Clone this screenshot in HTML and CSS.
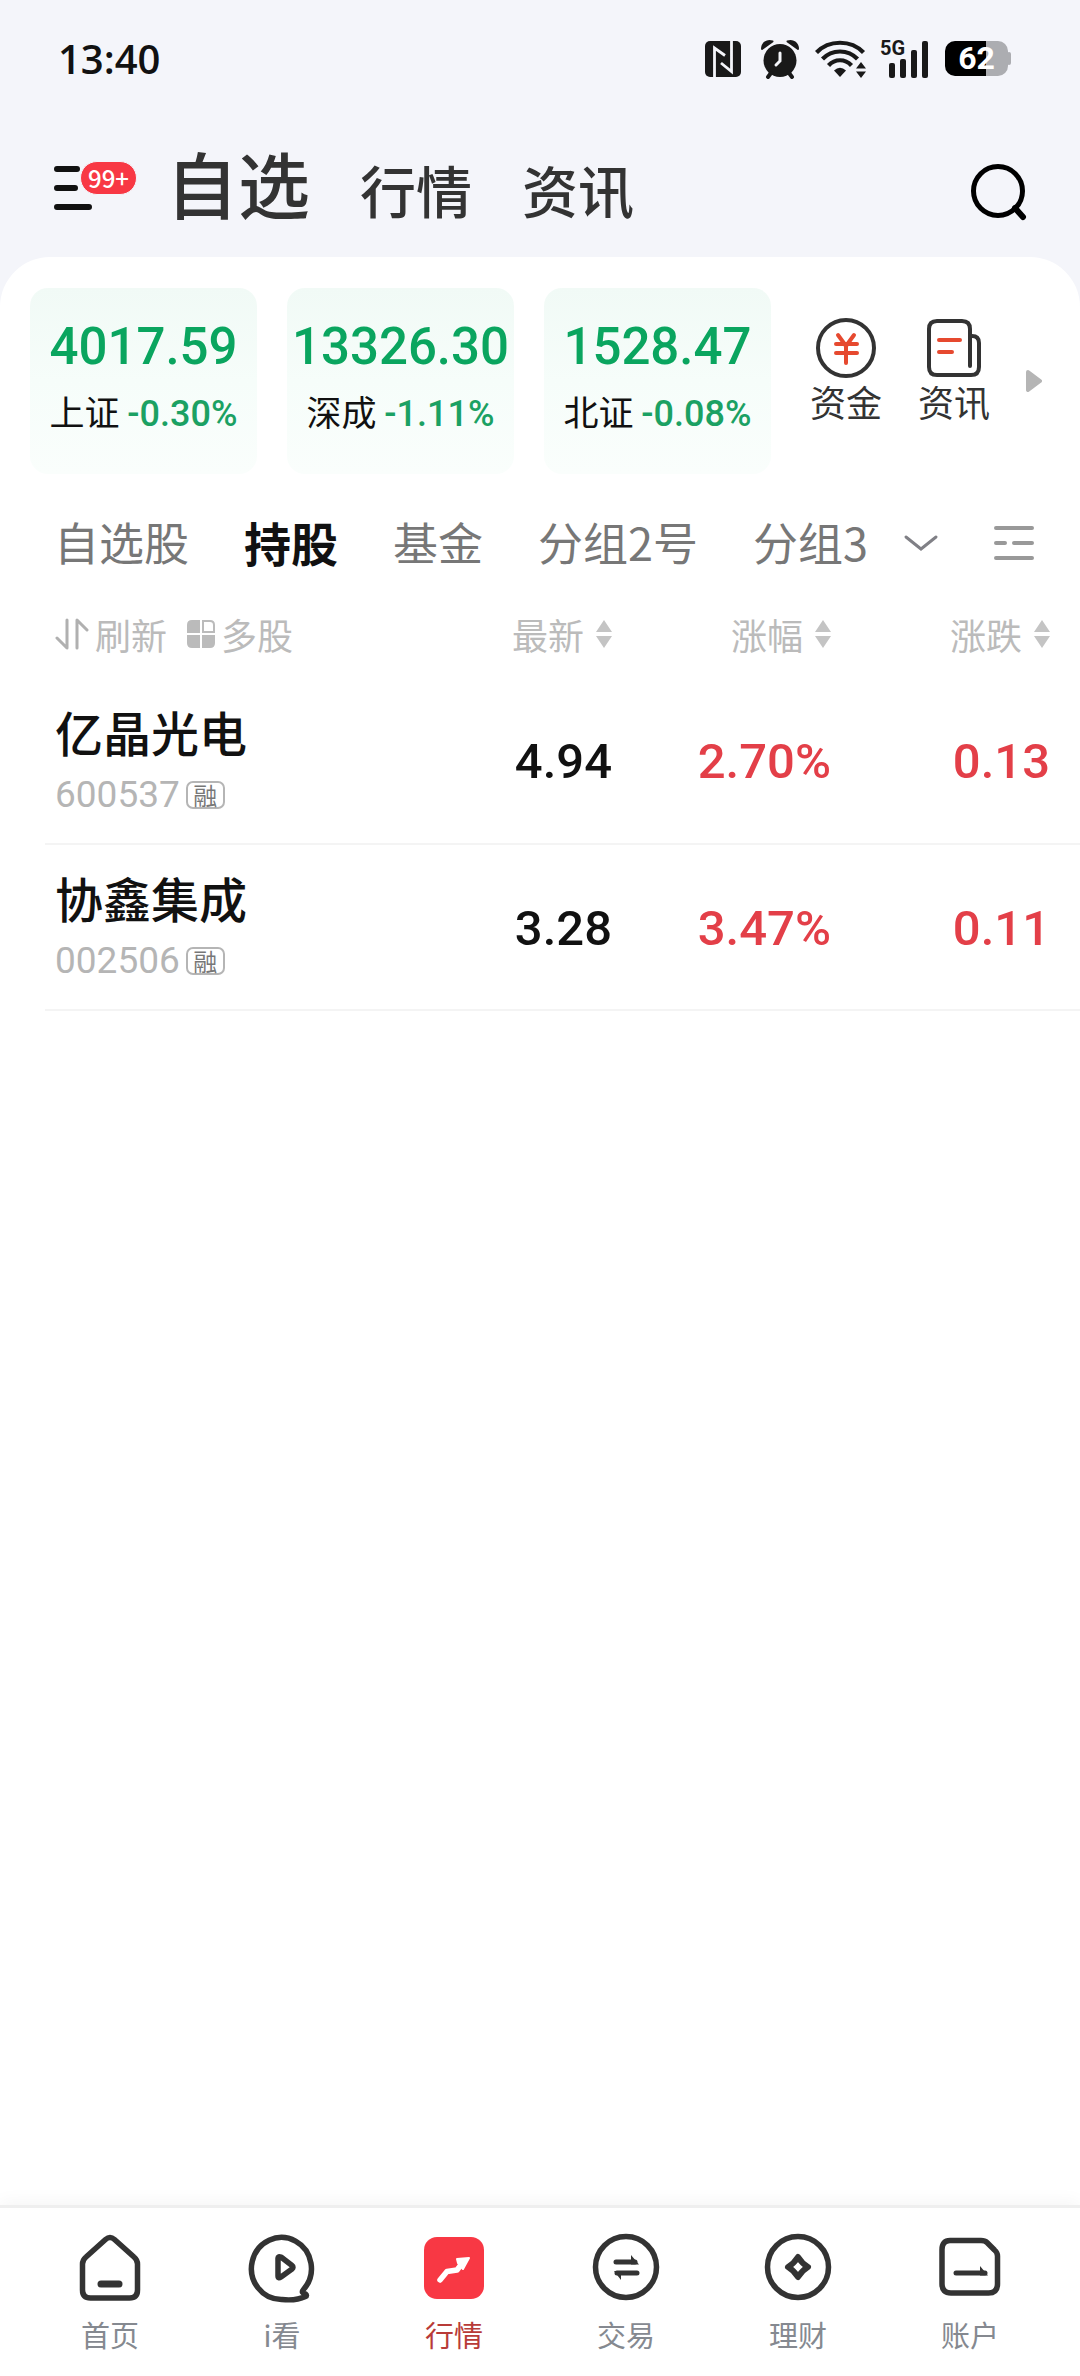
FILE: index.html
```html
<!DOCTYPE html>
<html lang="zh-CN">
<head>
    <meta charset="UTF-8">
    <meta name="viewport" content="width=device-width, initial-scale=1.0">
    <title>自选</title>
    <link rel="stylesheet" href="styles.css">
</head>
<body>
    <div class="status">
        <span class="time">13:40</span>
        <div class="status-icons">
            <svg width="36" height="38" viewBox="0 0 36 38">
                <rect x="0" y="1" width="36" height="36" rx="5" fill="#191919"/>
                <path d="M9.500 37V8L20 15.500M26.500 1v30.500L16 23" fill="none" stroke="#f4f5fa" stroke-width="2.800"/>
            </svg>
            <svg class="alarm" width="38" height="40" viewBox="0 0 38 40">
                <circle cx="19" cy="21.500" r="16.500" fill="#191919"/>
                <path d="M1 10C1 4 6 .5 11.500 2.500zM37 10C37 4 32 .5 26.500 2.500z" fill="#191919" stroke="#191919" stroke-width="2" stroke-linejoin="round"/>
                <path d="M10 34l-3 4M28 34l3 4" stroke="#191919" stroke-width="4" stroke-linecap="round"/>
                <path d="M19 14v8l-4 4" fill="none" stroke="#f4f5fa" stroke-width="3" stroke-linecap="round"/>
            </svg>
            <svg class="wifi" width="52" height="38" viewBox="0 0 52 38">
                <g fill="none" stroke="#191919" stroke-width="4.200">
                    <path d="M1.500 12.500C14-.5 36-.5 48.500 12.500"/>
                    <path d="M7.500 19C17 9 33 9 42.500 19"/>
                    <path d="M13.500 25.500C20 18.500 30 18.500 36.500 25.500"/>
                </g>
                <path d="M25 37l-6-6.500q6-5.500 12 0z" fill="#191919"/>
                <path d="M46 22l5 6.500H41zM46 38l-5-6.500h10z" fill="#191919"/>
            </svg>
            <div class="signal">
                <span>5G</span>
                <svg width="40" height="38" viewBox="0 0 40 38" fill="#191919">
                    <rect x="1" y="23" width="6" height="15" rx="2"/>
                    <rect x="12" y="19" width="6" height="19" rx="2"/>
                    <rect x="23" y="10" width="6" height="28" rx="2"/>
                    <rect x="34" y="1" width="6" height="37" rx="2"/>
                </svg>
            </div>
            <div class="battery">62</div>
        </div>
    </div>

    <header class="header">
        <button class="menu" aria-label="菜单">
            <svg width="38" height="50" viewBox="0 0 38 50" stroke="#111" stroke-width="6" stroke-linecap="round">
                <path d="M3 7h20M3 26h18M3 45h32"/>
            </svg>
            <span class="badge">99+</span>
        </button>
        <nav class="header-tabs">
            <a href="#" class="current">自选</a>
            <a href="#">行情</a>
            <a href="#">资讯</a>
        </nav>
        <button class="search" aria-label="搜索">
            <svg width="58" height="60" viewBox="0 0 58 60" fill="none" stroke="#000" stroke-width="5">
                <circle cx="28" cy="29" r="24.500"/>
                <path d="M45 46l8 9" stroke-width="6" stroke-linecap="round"/>
            </svg>
        </button>
    </header>

    <main class="panel">
        <section class="indexes">
            <a href="#" class="index-card">
                <strong>4017.59</strong>
                <span>上证 <em>-0.30%</em></span>
            </a>
            <a href="#" class="index-card">
                <strong>13326.30</strong>
                <span>深成 <em>-1.11%</em></span>
            </a>
            <a href="#" class="index-card">
                <strong>1528.47</strong>
                <span>北证 <em>-0.08%</em></span>
            </a>
            <div class="shortcuts">
                <a href="#">
                    <svg width="60" height="60" viewBox="0 0 60 60" fill="none" stroke="#333" stroke-width="4">
                        <circle cx="30" cy="30" r="28"/>
                        <path d="M22 17l8 11 8-11M30 28v17M20 26h21M20 35h21" stroke="#e6492f" stroke-linecap="round"/>
                    </svg>
                    资金
                </a>
                <a href="#">
                    <svg width="60" height="60" viewBox="0 0 60 60" fill="none" stroke="#333" stroke-width="4" stroke-linecap="round">
                        <path d="M46 48V11q0-8-8-8H13q-8 0-8 8v38q0 8 8 8h34q8 0 8-8V25q0-7-7-7"/>
                        <path d="M15 22h21M15 34h13" stroke="#e6492f"/>
                    </svg>
                    资讯
                </a>
            </div>
            <button class="more" aria-label="更多">
                <svg width="16" height="22" viewBox="0 0 16 22">
                    <path d="M2 2l12 9-12 9z" fill="#b5b5b5" stroke="#b5b5b5" stroke-width="4" stroke-linejoin="round"/>
                </svg>
            </button>
        </section>

        <nav class="groups">
            <a href="#">自选股</a>
            <a href="#" class="current">持股</a>
            <a href="#">基金</a>
            <a href="#">分组2号</a>
            <a href="#">分组3</a>
            <button class="expand" aria-label="展开">
                <svg width="36" height="20" viewBox="0 0 36 20" fill="none" stroke="#808086" stroke-width="3" stroke-linecap="round">
                    <path d="M3 4l15 12L33 4"/>
                </svg>
            </button>
            <button class="manage" aria-label="管理分组">
                <svg width="40" height="36" viewBox="0 0 40 36" stroke="#999" stroke-width="4" stroke-linecap="round">
                    <path d="M2 3h36M2 18h9M20 18h18M2 33h36"/>
                </svg>
            </button>
        </nav>

        <table class="stocks">
            <thead>
                <tr>
                    <th class="first">
                        <div class="tools">
                            <button>
                                <svg width="34" height="32" viewBox="0 0 34 32" fill="none" stroke="#b0b0b0" stroke-width="3" stroke-linecap="round" stroke-linejoin="round">
                                    <path d="M12 2v28L2 20M22 30V2l10 10"/>
                                </svg>
                                刷新
                            </button>
                            <button>
                                <svg width="28" height="28" viewBox="0 0 28 28" fill="#bbb">
                                    <path d="M5 0h8v13H0V5q0-5 5-5zM0 15h13v13H5q-5 0-5-5zM15 15h13v8q0 5-5 5h-8z"/>
                                    <path d="M16 1h7q4 0 4 4v7H16z" fill="none" stroke="#bbb" stroke-width="2"/>
                                </svg>
                                多股
                            </button>
                        </div>
                    </th>
                    <th><button>最新 <svg width="16" height="30" viewBox="0 0 16 30" fill="#c4c4c4"><path d="M8 1l8 12H0zM8 29L0 17h16z"/></svg></button></th>
                    <th><button>涨幅 <svg width="16" height="30" viewBox="0 0 16 30" fill="#c4c4c4"><path d="M8 1l8 12H0zM8 29L0 17h16z"/></svg></button></th>
                    <th><button>涨跌 <svg width="16" height="30" viewBox="0 0 16 30" fill="#c4c4c4"><path d="M8 1l8 12H0zM8 29L0 17h16z"/></svg></button></th>
                </tr>
            </thead>
            <tbody>
                <tr>
                    <td>
                        <div class="name">亿晶光电</div>
                        <div class="code">600537 <span class="tag">融</span></div>
                    </td>
                    <td>4.94</td>
                    <td class="up">2.70%</td>
                    <td class="up">0.13</td>
                </tr>
                <tr>
                    <td>
                        <div class="name">协鑫集成</div>
                        <div class="code">002506 <span class="tag">融</span></div>
                    </td>
                    <td>3.28</td>
                    <td class="up">3.47%</td>
                    <td class="up">0.11</td>
                </tr>
            </tbody>
        </table>
    </main>

    <nav class="tabbar">
        <a href="#">
            <svg width="68" height="72" viewBox="0 0 68 72" fill="none" stroke="#333" stroke-width="5.500" stroke-linejoin="round">
                <path d="M29.500 7.500q4.500-4 9 0L58 25q3.500 3 3.500 7v26q0 8-8 8h-39q-8 0-8-8V32q0-4 3.500-7z"/>
                <path d="M25 52h18" stroke-width="7" stroke-linecap="round"/>
            </svg>
            首页
        </a>
        <a href="#">
            <svg width="68" height="72" viewBox="0 0 68 72" fill="none" stroke="#333" stroke-width="5.500" stroke-linejoin="round">
                <path d="M55.500 57.500A30 31 0 1 0 34 67.500Q48 69 57.500 64.500q2-1 0-2.500-5-1-2-4.500Z"/>
                <path d="M30 26v18q0 3 3 1l11-8q2-2 0-3.500L33 25q-3-1-3 1z"/>
            </svg>
            i看
        </a>
        <a href="#" class="current">
            <svg width="68" height="72" viewBox="0 0 68 72">
                <rect x="4" y="5" width="60" height="62" rx="13" fill="#f83844"/>
                <path d="M20 48l7-8.500 10-1.500 7-9" fill="none" stroke="#fff" stroke-width="5.500" stroke-linecap="round" stroke-linejoin="round"/>
                <path d="M37 27l12-1-6 11-5-6z" fill="#fff" stroke="#fff" stroke-width="2" stroke-linejoin="round"/>
            </svg>
            行情
        </a>
        <a href="#">
            <svg width="68" height="72" viewBox="0 0 68 72" fill="none" stroke="#333" stroke-width="5.500">
                <circle cx="34" cy="35" r="30.500"/>
                <path d="M24 30h19M25 41h20" stroke-width="5" stroke-linecap="round"/>
                <path d="M39 23l8 9.500h-8zM29 48l-7-9h7z" fill="#333" stroke="none"/>
            </svg>
            交易
        </a>
        <a href="#">
            <svg width="68" height="72" viewBox="0 0 68 72" fill="none" stroke="#333" stroke-width="5.500" stroke-linejoin="round">
                <circle cx="34" cy="35" r="30.500"/>
                <path d="M34 25q4 6.500 10 10-6 3.500-10 10-4-6.500-10-10 6-3.500 10-10z" stroke-width="6"/>
            </svg>
            理财
        </a>
        <a href="#">
            <svg width="68" height="72" viewBox="0 0 68 72" fill="none" stroke="#333" stroke-width="5.500" stroke-linejoin="round">
                <path d="M14 8.500h31q4 0 6 2l7.500 7.500q3 2.500 3 6v28q0 9-9 9H15q-9 0-9-9V17.500q0-9 8-9z"/>
                <path d="M20 41h29" stroke-width="5" stroke-linecap="round"/>
                <path d="M44 34l8 9.500h-8z" fill="#333" stroke="none"/>
            </svg>
            账户
        </a>
    </nav>
</body>
</html>
```
FILE: styles.css
```css
* {
    box-sizing: border-box;
}
body {
    font-family: "Noto Sans CJK SC", sans-serif;
    margin: 0;
    min-height: 100vh;
    display: flex;
    flex-direction: column;
    background-color: #f4f5fa;
    color: #111;
}
a {
    color: inherit;
    text-decoration: none;
}
button {
    padding: 0;
    border: none;
    background: none;
    font: inherit;
    color: inherit;
    cursor: pointer;
}
svg {
    display: block;
    flex-shrink: 0;
}

/* Status bar */
.status {
    display: flex;
    justify-content: space-between;
    align-items: center;
    height: 117px;
    padding: 0 69px 0 58px;
}
.time {
    font-family: "Open Sans", sans-serif;
    font-size: 40px;
    font-weight: 600;
}
.status-icons {
    display: flex;
    align-items: center;
    color: #191919;
}
.alarm {
    margin-left: 20px;
}
.wifi {
    margin-left: 16px;
}
.signal {
    position: relative;
    margin-left: 21px;
}
.signal span {
    position: absolute;
    left: -8px;
    top: -2px;
    font-family: Roboto, sans-serif;
    font-size: 20px;
    line-height: 20px;
    font-weight: 700;
}
.battery {
    position: relative;
    width: 63px;
    margin-left: 17px;
    margin-right: 3px;
    border-radius: 10px;
    background: linear-gradient(to right, #000 65%, #acadb1 65%);
    color: #fff;
    font-family: Roboto, sans-serif;
    font-size: 32px;
    line-height: 35px;
    font-weight: 700;
    text-align: center;
}
.battery::after {
    content: "";
    position: absolute;
    right: -3px;
    top: 11px;
    width: 4px;
    height: 13px;
    border-radius: 2px;
    background-color: #acadb1;
}

/* Header */
.header {
    display: flex;
    align-items: center;
    height: 140px;
    padding: 0 52px 0 54px;
    color: #333;
}
.menu {
    position: relative;
    width: 84px;
}
.badge {
    position: absolute;
    left: 26px;
    top: -1px;
    height: 34px;
    padding: 0 7px;
    border: 1px solid #f4f5fa;
    border-radius: 17px;
    background-color: #f83844;
    color: #fff;
    font-size: 24px;
    line-height: 32px;
    font-weight: 500;
}
.header-tabs {
    flex: 1;
    display: flex;
    align-items: baseline;
    gap: 50px;
    margin-left: 28px;
    padding-bottom: 4px;
    font-size: 56px;
    line-height: 80px;
    font-weight: 500;
}
.header-tabs .current {
    font-size: 72px;
}
.search {
    padding-top: 9px;
}

/* White panel */
.panel {
    flex: 1;
    padding-top: 31px;
    border-radius: 50px 50px 0 0;
    background-color: #fff;
}
.indexes {
    display: flex;
    gap: 30px;
    padding: 0 38px 0 30px;
}
.index-card {
    flex: 1;
    display: flex;
    flex-direction: column;
    align-items: center;
    gap: 10px;
    height: 186px;
    padding-top: 29px;
    border-radius: 18px;
    background: linear-gradient(#f1faf6, #f6fdfa 50%, #fafefc);
    font-size: 35px;
    line-height: 48px;
    white-space: nowrap;
}
.index-card strong {
    font-family: Roboto, sans-serif;
    font-size: 51px;
    line-height: 60px;
    font-weight: 500;
    color: #0aa55f;
}
.index-card em {
    font-family: Roboto, sans-serif;
    font-size: 36px;
    font-style: normal;
    font-weight: 500;
    color: #1ba163;
}
.shortcuts {
    display: flex;
    gap: 36px;
    padding: 30px 6px 0 9px;
    color: #333;
    font-size: 36px;
    line-height: 46px;
}
.shortcuts a {
    display: flex;
    flex-direction: column;
    align-items: center;
}
.more {
    align-self: center;
}

/* Stock groups */
.groups {
    display: flex;
    align-items: center;
    gap: 55px;
    height: 138px;
    padding: 0 50px 0 54px;
    color: #777;
    font-size: 45px;
    white-space: nowrap;
}
.groups a {
    padding-bottom: 4px;
}
.groups .current {
    color: #111;
    font-size: 47px;
    font-weight: 700;
}
.expand {
    margin-left: -20px;
}
.manage {
    margin-left: auto;
}

/* Stock list */
.stocks {
    width: calc(100% - 45px);
    margin-left: 45px;
    border-collapse: collapse;
    table-layout: fixed;
}
.stocks th {
    width: 219px;
    height: 66px;
    padding: 0 0 22px;
    color: #bbb;
    font-size: 36px;
    line-height: 44px;
    font-weight: 400;
}
.stocks .first {
    width: auto;
    padding-left: 10px;
}
.stocks th:last-child {
    width: 249px;
    padding-right: 30px;
}
.stocks th button {
    display: flex;
    align-items: center;
    gap: 12px;
    margin-left: auto;
}
.tools {
    display: flex;
    align-items: center;
    gap: 20px;
}
.stocks .tools button {
    gap: 6px;
    margin-left: 0;
}
.stocks td {
    height: 166px;
    padding: 2px 0 0;
    border-bottom: 2px solid #f4f4f4;
    font-family: Roboto, sans-serif;
    font-size: 49px;
    font-weight: 500;
    text-align: right;
}
.stocks td:first-child {
    padding-left: 10px;
    text-align: left;
}
.stocks td:last-child {
    padding-right: 30px;
}
.stocks .up {
    color: #e33f48;
}
.name {
    font-family: "Noto Sans CJK SC", sans-serif;
    font-size: 48px;
    line-height: 64px;
    font-weight: 500;
}
.code {
    display: flex;
    align-items: center;
    gap: 6px;
    margin-top: 4px;
    padding-bottom: 2px;
    color: #b5b5b5;
    font-size: 37px;
    line-height: 56px;
    font-weight: 400;
}
.tag {
    width: 39px;
    height: 28px;
    border: 2px solid #b5b5b5;
    border-radius: 7px;
    color: #777;
    font-family: "Noto Sans CJK SC", sans-serif;
    font-size: 24px;
    line-height: 24px;
    text-align: center;
}

/* Bottom tab bar */
.tabbar {
    display: flex;
    padding: 24px 24px 20px;
    border-top: 3px solid #efefef;
    background-color: #fff;
    box-shadow: 0 -4px 16px rgba(0, 0, 0, 0.04);
    color: #858990;
    font-size: 29px;
    line-height: 44px;
}
.tabbar a {
    flex: 1;
    display: flex;
    flex-direction: column;
    align-items: center;
    gap: 8px;
}
.tabbar .current {
    color: #b83b38;
}
```
